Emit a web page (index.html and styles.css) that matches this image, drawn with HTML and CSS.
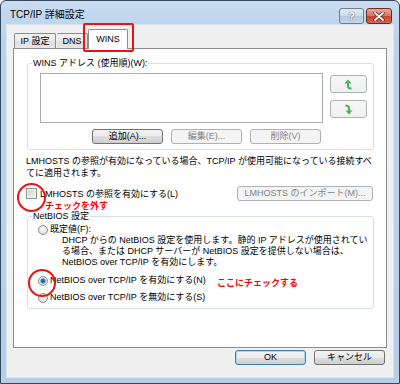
FILE: index.html
```html
<!DOCTYPE html>
<html lang="ja">
<head>
    <meta charset="UTF-8">
    <title>TCP/IP 詳細設定</title>
    <link rel="stylesheet" href="styles.css">
</head>
<body>
    <div class="window">
        <div class="titlebar">
            <span class="title">TCP/IP 詳細設定</span>
            <div class="caption-buttons">
                <span class="cap-btn help">?</span>
                <span class="cap-btn close">
                    <svg width="12" height="9" viewBox="0 0 12 9">
                        <path d="M2 1 L10 8 M10 1 L2 8" stroke="#5a1e16" stroke-width="3.2" stroke-linecap="round"/>
                        <path d="M2 1 L10 8 M10 1 L2 8" stroke="#fff" stroke-width="1.8" stroke-linecap="round"/>
                    </svg>
                </span>
            </div>
        </div>

        <div class="client">
            <div class="tabs">
                <span class="tab tab-ip">IP 設定</span>
                <span class="tab tab-dns">DNS</span>
                <span class="tab tab-wins active">WINS</span>
            </div>

            <div class="panel">
                <fieldset class="group wins-group">
                    <legend>WINS アドレス (使用順)(W):</legend>
                    <div class="wins-body">
                        <div class="list-col">
                            <div class="listbox"></div>
                            <div class="btn-row">
                                <button class="btn">追加(A)...</button>
                                <button class="btn disabled">編集(E)...</button>
                                <button class="btn disabled">削除(V)</button>
                            </div>
                        </div>
                        <div class="arrow-col">
                            <button class="btn arrow">
                                <svg width="9" height="11" viewBox="0 0 9 11">
                                    <path d="M4 3.5 V7 Q4 9.5 7.5 9.5" fill="none" stroke="#4cb54f" stroke-width="2"/>
                                    <polygon points="0.5,4.5 4,0.5 7.5,4.5" fill="#4cb54f"/>
                                </svg>
                            </button>
                            <button class="btn arrow">
                                <svg width="9" height="11" viewBox="0 0 9 11">
                                    <g transform="rotate(180 4.5 5.5)">
                                        <path d="M4 3.5 V7 Q4 9.5 7.5 9.5" fill="none" stroke="#4cb54f" stroke-width="2"/>
                                        <polygon points="0.5,4.5 4,0.5 7.5,4.5" fill="#4cb54f"/>
                                    </g>
                                </svg>
                            </button>
                        </div>
                    </div>
                </fieldset>

                <p class="note">LMHOSTS の参照が有効になっている場合、TCP/IP が使用可能になっている接続すべ<br>てに適用されます。</p>

                <div class="lm-row">
                    <label class="check"><span class="checkbox"></span>LMHOSTS の参照を有効にする(L)</label>
                    <button class="btn disabled import">LMHOSTS のインポート(M)...</button>
                </div>

                <fieldset class="group netbios-group">
                    <legend>NetBIOS 設定</legend>
                    <div class="netbios-body">
                        <div class="radio-row"><span class="radio"></span>既定値(F):</div>
                        <p class="desc">DHCP からの NetBIOS 設定を使用します。静的 IP アドレスが使用されてい<br>る場合、または DHCP サーバーが NetBIOS 設定を提供しない場合は、<br>NetBIOS over TCP/IP を有効にします。</p>
                        <div class="radio-row second"><span class="radio checked"></span>NetBIOS over TCP/IP を有効にする(N)</div>
                        <div class="radio-row third"><span class="radio"></span>NetBIOS over TCP/IP を無効にする(S)</div>
                    </div>
                </fieldset>
            </div>

            <div class="dialog-buttons">
                <button class="btn default">OK</button>
                <button class="btn">キャンセル</button>
            </div>
        </div>
    </div>

    <!-- red annotations drawn over the screenshot -->
    <div class="mark mark-tab"></div>
    <div class="mark mark-check"></div>
    <div class="mark mark-radio"></div>
    <span class="callout callout-uncheck">チェックを外す</span>
    <span class="callout callout-check">ここにチェックする</span>
</body>
</html>
```

FILE: styles.css
```css
body {
    margin: 0;
    font-family: "Liberation Sans", "Noto Sans CJK JP", sans-serif;
    font-size: 9px;
    color: #000;
    background: #fff;
}
.window {
    width: 400px;
    height: 384px;
    box-sizing: border-box;
    border: 1px solid #34475c;
    border-radius: 6px 6px 0 0;
    background: linear-gradient(#c8dcf1, #b9d1ea 40px, #b7cfe9);
    padding: 0 6px 6px 6px;
    display: flex;
    flex-direction: column;
}
.titlebar {
    height: 24px;
    display: flex;
    justify-content: space-between;
    align-items: flex-start;
}
.title {
    margin: 8px 0 0 3px;
    font-size: 10px;
    line-height: 12px;
}
.caption-buttons {
    display: flex;
    gap: 2px;
    margin: 7px 1px 0 0;
}
.cap-btn {
    height: 16px;
    box-sizing: border-box;
    border: 1px solid #6a7d93;
    border-radius: 3px;
    display: flex;
    align-items: center;
    justify-content: center;
}
.help {
    width: 25px;
    background: linear-gradient(#e3ecf5, #cbd9e8 50%, #b5c8dc 50%, #c6d6e6);
    color: #fff;
    font-weight: bold;
    font-size: 11px;
    text-shadow: 0 0 1px #4d5e70, 0 0 1px #4d5e70;
}
.close {
    width: 26px;
    border-color: #6b2a20;
    background: linear-gradient(#e9a99b, #d47564 50%, #c4432d 50%, #d2674f);
}
.client {
    flex: 1;
    background: #f0f0f0;
    padding: 4px 6px 0 6px;
    box-shadow: 0 0 0 1px #d8e5f2;
}
.tabs {
    height: 19px;
    display: flex;
    align-items: flex-end;
}
.tab {
    height: 15px;
    box-sizing: border-box;
    border: 1px solid #898c95;
    border-bottom: none;
    border-radius: 2px 2px 0 0;
    background: linear-gradient(#f3f3f3, #ebebeb 50%, #dedede 50%, #e6e6e6);
    text-align: center;
    line-height: 14px;
}
.tab-ip {
    width: 42px;
    margin-left: 1px;
}
.tab-dns {
    width: 31px;
    margin-left: 1px;
    border-left: none;
}
.tab-wins {
    width: 40px;
}
.tab.active {
    height: 20px;
    margin-bottom: -1px;
    position: relative;
    background: #fff;
    line-height: 18px;
}
.panel {
    height: 300px;
    box-sizing: border-box;
    border: 1px solid #898c95;
    background: #fff;
    padding: 0 12px 0 13px;
}
.group {
    border: 1px solid #d5dfe5;
    border-radius: 3px;
    margin: 0;
    padding: 0;
    min-width: 0;
}
.group legend {
    margin-left: 4px;
    padding: 0 1px;
    line-height: 11px;
}
.wins-group {
    margin-top: 9px;
}
.wins-body {
    display: flex;
    padding: 4px 0 5px 12px;
}
.listbox {
    width: 283px;
    height: 50px;
    box-sizing: border-box;
    border: 1px solid #abadb3;
    background: #fff;
}
.btn-row {
    display: flex;
    justify-content: flex-end;
    gap: 8px;
    margin-top: 6px;
    padding-right: 2px;
}
.btn {
    height: 16px;
    width: 71px;
    box-sizing: border-box;
    padding: 0;
    border: 1px solid #707070;
    border-radius: 3px;
    background: linear-gradient(#f2f2f2, #ebebeb 50%, #dddddd 50%, #cfcfcf);
    font-family: inherit;
    font-size: 9px;
    line-height: 14px;
    color: #000;
    text-align: center;
}
.btn.disabled {
    border-color: #adb2b5;
    background: #f4f4f4;
    color: #838383;
}
.arrow-col {
    display: flex;
    flex-direction: column;
    gap: 7px;
    margin: 2px 0 0 7px;
}
.btn.arrow {
    width: 37px;
    height: 18px;
    border-color: #adb2b5;
    background: linear-gradient(#f7f7f7, #efefef);
    display: flex;
    align-items: center;
    justify-content: center;
}
.note {
    margin: 5px 0 0 -1px;
    line-height: 12px;
    white-space: nowrap;
}
.lm-row {
    display: flex;
    justify-content: space-between;
    align-items: center;
    height: 16px;
    margin: 6px 1px 0 -1px;
}
.check {
    display: flex;
    align-items: center;
}
.checkbox {
    width: 11px;
    height: 11px;
    box-sizing: border-box;
    border: 1px solid #8e8f8f;
    background: linear-gradient(135deg, #cfcfcf, #f7f7f7);
    box-shadow: inset 0 0 0 1px #f4f4f4;
    margin-right: 3px;
}
.btn.import {
    width: 136px;
}
.netbios-group {
    margin-top: 10px;
}
.netbios-body {
    padding: 2px 0 5px 10px;
}
.radio-row {
    display: flex;
    align-items: center;
    line-height: 11px;
}
.radio-row.second {
    margin-top: 7px;
}
.radio-row.third {
    margin-top: 6px;
}
.radio {
    width: 10px;
    height: 10px;
    box-sizing: border-box;
    border: 1px solid #8e8f8f;
    border-radius: 50%;
    background: radial-gradient(circle at 50% 40%, #fdfdfd, #d4d4d4);
    margin-right: 2px;
}
.radio.checked {
    background: radial-gradient(circle, #1b5ea8 0, #2f74c0 2px, #8bb8e6 2.6px, #f0f0f0 3.2px, #d4d4d4 5px);
}
.desc {
    margin: 0 0 0 24px;
    line-height: 11px;
    white-space: nowrap;
}
.dialog-buttons {
    display: flex;
    justify-content: flex-end;
    gap: 8px;
    margin-top: 2px;
    padding-right: 2px;
}
.btn {
    height: 15px;
    line-height: 13px;
}
.btn.arrow {
    height: 18px;
}
.btn.default {
    border-color: #3c7fb1;
    box-shadow: inset 0 0 0 1px #a6d7f5;
}
.mark {
    position: absolute;
    box-sizing: border-box;
    border: 2px solid #ee1111;
}
.mark-tab {
    left: 83px;
    top: 23px;
    width: 51px;
    height: 29px;
    border-radius: 2px;
}
.mark-check {
    left: 17px;
    top: 183px;
    width: 29px;
    height: 29px;
    border-radius: 50%;
}
.mark-radio {
    left: 28px;
    top: 269px;
    width: 28px;
    height: 28px;
    border-radius: 50%;
}
.callout {
    position: absolute;
    color: #ff0000;
    font-weight: bold;
    font-size: 9px;
    line-height: 10px;
    white-space: nowrap;
}
.callout-uncheck {
    left: 45px;
    top: 201px;
}
.callout-check {
    left: 217px;
    top: 278px;
}
```
